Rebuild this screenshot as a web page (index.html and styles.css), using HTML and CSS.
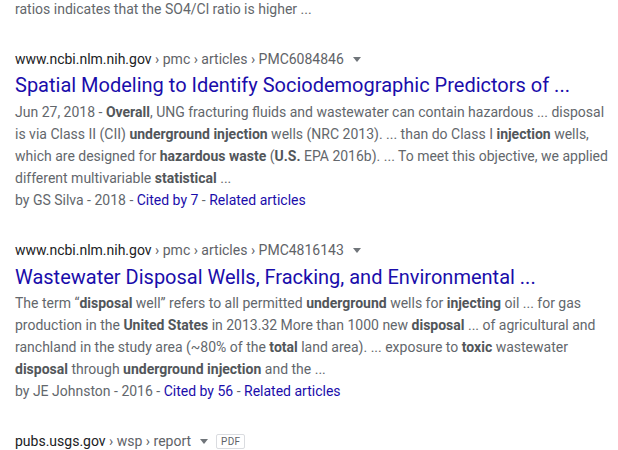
FILE: index.html
```html
<!DOCTYPE html>
<html>
<head>
<meta charset="utf-8">
<link rel="stylesheet" href="styles.css">
</head>
<body>
<div class="page">
  <div class="snippet tail"><span class="line">ratios indicates that the SO4/Cl ratio is higher ...</span></div>

  <div class="result">
    <div class="url"><span class="domain">www.ncbi.nlm.nih.gov</span><span class="path"> › pmc › articles › PMC6084846</span><span class="caret"></span></div>
    <div class="title">Spatial Modeling to Identify Sociodemographic Predictors of ...</div>
    <div class="snippet">
      <span class="line"><span class="date">Jun 27, 2018 - </span><b>Overall</b>, UNG fracturing fluids and wastewater can contain hazardous ... disposal</span>
      <span class="line">is via Class II (CII) <b>underground injection</b> wells (NRC 2013). ... than do Class I <b>injection</b> wells,</span>
      <span class="line">which are designed for <b>hazardous waste</b> (<b>U.S.</b> EPA 2016b). ... To meet this objective, we applied</span>
      <span class="line">different multivariable <b>statistical</b> ...</span>
      <span class="line meta">by GS Silva - 2018 - <a class="link">Cited by 7</a> - <a class="link">Related articles</a></span>
    </div>
  </div>

  <div class="result">
    <div class="url"><span class="domain">www.ncbi.nlm.nih.gov</span><span class="path"> › pmc › articles › PMC4816143</span><span class="caret"></span></div>
    <div class="title second">Wastewater Disposal Wells, Fracking, and Environmental ...</div>
    <div class="snippet">
      <span class="line">The term “<b>disposal</b> well” refers to all permitted <b>underground</b> wells for <b>injecting</b> oil ... for gas</span>
      <span class="line">production in the <b>United States</b> in 2013.32 More than 1000 new <b>disposal</b> ... of agricultural and</span>
      <span class="line">ranchland in the study area (~80% of the <b>total</b> land area). ... exposure to <b>toxic</b> wastewater</span>
      <span class="line"><b>disposal</b> through <b>underground injection</b> and the ...</span>
      <span class="line meta">by JE Johnston - 2016 - <a class="link">Cited by 56</a> - <a class="link">Related articles</a></span>
    </div>
  </div>

  <div class="result">
    <div class="url"><span class="domain">pubs.usgs.gov</span><span class="path"> › wsp › report</span><span class="caret"></span><span class="badge">PDF</span></div>
  </div>
</div>
</body>
</html>
```

FILE: styles.css
```css
html, body {
  margin: 0;
  padding: 0;
  background: #fff;
}
body {
  font-family: Roboto, "Liberation Sans", Arial, sans-serif;
  font-size: 14px;
  color: #63676c;
  overflow: hidden;
}
.page {
  padding-left: 15px;
  margin-top: -2px;
}
.snippet {
  display: flex;
  flex-direction: column;
}
.line {
  display: block;
  line-height: 22px;
  white-space: nowrap;
}
.snippet b {
  font-weight: 700;
  color: #52565a;
}
.result {
  margin-top: 29px;
}
.url {
  display: flex;
  align-items: center;
  height: 20px;
  white-space: nowrap;
}
.domain {
  color: #202124;
}
.path {
  color: #5f6368;
  white-space: pre;
}
.caret {
  width: 0;
  height: 0;
  border-left: 4px solid transparent;
  border-right: 4px solid transparent;
  border-top: 5px solid #70757a;
  margin-left: 9px;
  margin-top: 1px;
}
.badge {
  margin-left: 8px;
  border: 1px solid #dadce0;
  border-radius: 2px;
  font-size: 10px;
  line-height: 13px;
  padding: 0 4px;
  color: #5f6368;
  letter-spacing: 0.3px;
}
.title {
  margin-top: 3px;
  margin-bottom: 3px;
  font-size: 20px;
  line-height: 26px;
  color: #1a0dab;
  white-space: nowrap;
}
.title.second {
  padding-top: 1px;
  margin-bottom: 2px;
}
.link {
  color: #1a0dab;
  text-decoration: none;
}
```
